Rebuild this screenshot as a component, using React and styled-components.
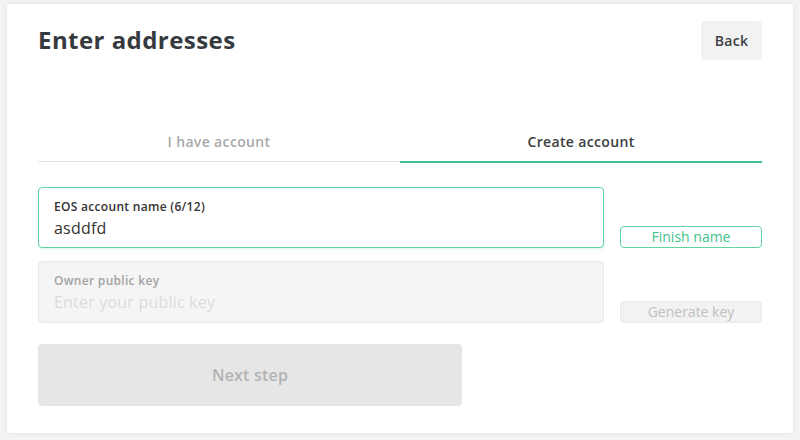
import * as React from 'react'
import styled, { createGlobalStyle } from 'styled-components'

const colors = {
  text: '#363a3e',
  muted: '#a9a9a9',
  green: '#3fc28e',
  greenBorder: '#62d39f',
  field: '#f5f5f5',
  fieldBorder: '#e9e9e9',
  button: '#f2f2f2',
}

const GlobalStyle = createGlobalStyle`
  html, body {
    margin: 0;
    padding: 0;
    background: #f3f3f3;
  }
  body {
    font-family: 'Open Sans', 'Liberation Sans', sans-serif;
    color: ${colors.text};
  }
`

const Page = styled.div`
  width: 800px;
  height: 440px;
  padding: 4px 7px 7px;
  box-sizing: border-box;
`

const Card = styled.section`
  background: #fff;
  height: 100%;
  box-sizing: border-box;
  padding: 17px 31px 0;
  border-radius: 3px;
  box-shadow: 0 0 6px 0 rgba(44, 44, 44, 0.08);
`

const Header = styled.header`
  display: flex;
  justify-content: space-between;
  align-items: flex-start;
  height: 40px;
`

const Title = styled.h1`
  margin: 3px 0 0;
  font-size: 24px;
  line-height: 32px;
  font-weight: 700;
  letter-spacing: 0.45px;
  color: ${colors.text};
`

const BackButton = styled.button`
  width: 61px;
  height: 39px;
  border: none;
  border-radius: 4px;
  background: ${colors.button};
  font-family: inherit;
  font-size: 14px;
  font-weight: 600;
  letter-spacing: 0.3px;
  color: #3d4144;
  padding: 0;
  cursor: pointer;
`

const Tabs = styled.nav`
  display: grid;
  grid-template-columns: 1fr 1fr;
  margin-top: 71px;
`

const Tab = styled.div`
  text-align: center;
  font-size: 14px;
  font-weight: 600;
  line-height: 20px;
  letter-spacing: 0.35px;
  padding-bottom: 9px;
  color: ${p => (p.active ? '#3a3e41' : colors.muted)};
  border-bottom: ${p => (p.active ? `2px solid ${colors.green}` : '1px solid #e0e6e6')};
  margin-bottom: ${p => (p.active ? '0' : '1px')};
`

const Form = styled.div`
  display: grid;
  grid-template-columns: 566px 142px;
  column-gap: 16px;
  row-gap: 13px;
  margin-top: 24px;
`

const Field = styled.label`
  display: flex;
  flex-direction: column;
  height: ${p => (p.disabled ? '62px' : '61px')};
  box-sizing: border-box;
  padding: 11px 15px 0;
  border-radius: 4px;
  border: ${p => (p.disabled ? `1px solid ${colors.fieldBorder}` : `1.5px solid ${colors.greenBorder}`)};
  background: ${p => (p.disabled ? colors.field : '#fff')};
  box-shadow: ${p => (p.disabled ? 'none' : '0 1px 3px rgba(98, 211, 159, 0.25)')};
`

const FieldLabel = styled.span`
  font-size: 12px;
  font-weight: 600;
  line-height: 16px;
  letter-spacing: 0.3px;
  color: ${p => (p.disabled ? '#a3a3a3' : '#333')};
`

const FieldValue = styled.span`
  margin-top: 3px;
  font-size: 16px;
  line-height: 20px;
  letter-spacing: 0.2px;
  color: ${p => (p.placeholder ? '#dcdcdc' : '#333')};
`

const SideButton = styled.button`
  align-self: end;
  height: 22px;
  box-sizing: border-box;
  padding: 0;
  border-radius: 4px;
  font-family: 'Open Sans', sans-serif;
  font-size: 14px;
  line-height: 18px;
  background: ${p => (p.disabled ? colors.button : '#fff')};
  border: ${p => (p.disabled ? `1px solid ${colors.fieldBorder}` : `1.5px solid ${colors.greenBorder}`)};
  color: ${p => (p.disabled ? '#c0c0c0' : colors.green)};
`

const NextButton = styled.button`
  display: block;
  margin-top: 21px;
  width: 424px;
  height: 62px;
  border: none;
  border-radius: 4px;
  background: #e6e6e6;
  font-family: inherit;
  font-size: 16px;
  font-weight: 600;
  letter-spacing: 0.2px;
  color: #b3b3b3;
`

export default function App() {
  return (
    <>
      <GlobalStyle />
      <Page>
        <Card>
          <Header>
            <Title>Enter addresses</Title>
            <BackButton>Back</BackButton>
          </Header>
          <Tabs>
            <Tab>I have account</Tab>
            <Tab active>Create account</Tab>
          </Tabs>
          <Form>
            <Field>
              <FieldLabel>EOS account name (6/12)</FieldLabel>
              <FieldValue>asddfd</FieldValue>
            </Field>
            <SideButton>Finish name</SideButton>
            <Field disabled>
              <FieldLabel disabled>Owner public key</FieldLabel>
              <FieldValue placeholder>Enter your public key</FieldValue>
            </Field>
            <SideButton disabled>Generate key</SideButton>
          </Form>
          <NextButton disabled>Next step</NextButton>
        </Card>
      </Page>
    </>
  )
}
